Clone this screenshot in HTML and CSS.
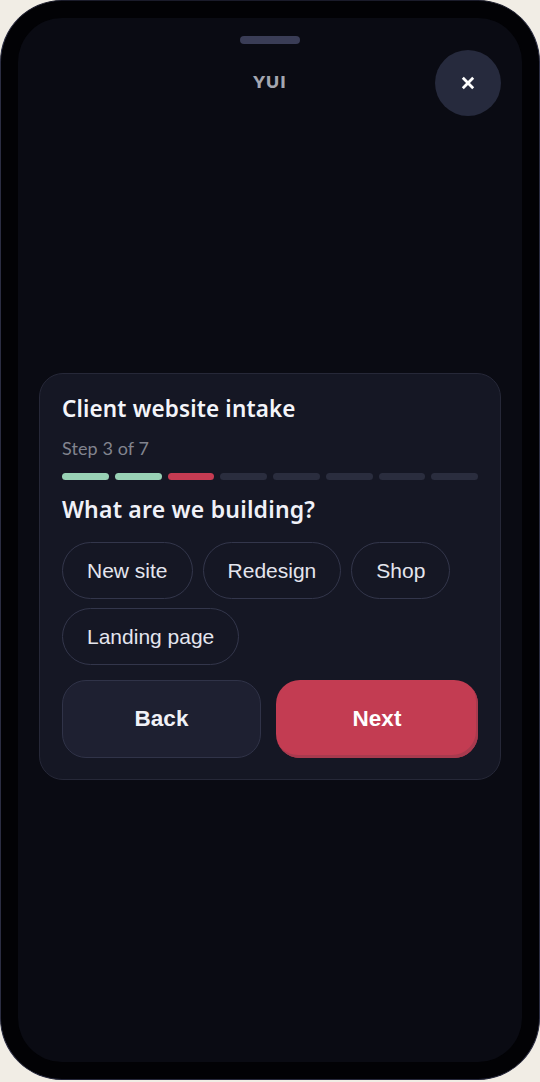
FILE: index.html
```html
<!DOCTYPE html>
<html lang="en">
<head>
<meta charset="utf-8">
<title>YUI</title>
<link rel="stylesheet" href="styles.css">
</head>
<body>
<div class="phone">
  <div class="screen">
    <header class="top">
      <div class="handle"></div>
      <div class="brand">YUI</div>
      <button class="close" aria-label="Close">
        <svg viewBox="0 0 14 14" width="14" height="14"><path d="M1.8 1.8 12.2 12.2M12.2 1.8 1.8 12.2" fill="none" stroke="#fff" stroke-width="2.8"/></svg>
      </button>
    </header>
    <main class="stage">
      <section class="card">
        <h1 class="title">Client website intake</h1>
        <p class="step">Step 3 of 7</p>
        <div class="progress">
          <span class="seg done"></span><span class="seg done"></span><span class="seg now"></span><span class="seg"></span><span class="seg"></span><span class="seg"></span><span class="seg"></span><span class="seg"></span>
        </div>
        <h2 class="question">What are we building?</h2>
        <div class="chips">
          <button class="chip">New site</button>
          <button class="chip">Redesign</button>
          <button class="chip">Shop</button>
          <button class="chip">Landing page</button>
        </div>
        <div class="actions">
          <button class="btn back">Back</button>
          <button class="btn next">Next</button>
        </div>
      </section>
    </main>
  </div>
</div>
</body>
</html>
```
FILE: styles.css
```css
* { box-sizing: border-box; }
html, body { margin: 0; height: 100%; }
body { background: #f1ede5; font-family: "Liberation Sans", Arial, sans-serif; overflow: hidden; }
.phone {
  width: 540px; height: 1080px; padding: 17px 17px;
  background: #020205; border: 1px solid #2b2d42; border-radius: 62px;
  border-top-color: #1a1b2a; border-bottom-color: #24263a;
}
.screen {
  height: 100%; display: flex; flex-direction: column;
  background: #0a0b13; border-radius: 44px; padding-bottom: 25px;
}
.top { position: relative; height: 98px; display: flex; flex-direction: column; align-items: center; padding-top: 18px; }
.handle { width: 60px; height: 8px; border-radius: 4px; background: #3a3d56; }
.brand { margin-top: 26px; font: 800 17.5px/24px Lato, sans-serif; letter-spacing: 1px; color: #a4a6b0; }
.close {
  position: absolute; top: 32px; right: 21px; width: 66px; height: 66px;
  border: 0; border-radius: 50%; background: #262a3d;
  display: flex; align-items: center; justify-content: center; padding: 0;
}
.stage { flex: 1; display: flex; align-items: center; justify-content: center; }
.card {
  width: 462px; height: 407px; padding: 20px 22px;
  background: #151724; border: 1px solid #262838; border-radius: 24px;
}
.title { margin: 0; font: 600 22.5px/30px "Noto Sans", sans-serif; letter-spacing: 0.15px; color: #f4f5fa; }
.step { margin: 12px 0 0; font: 400 18px/24px Lato, sans-serif; letter-spacing: 0.1px; color: #82848f; }
.progress { display: flex; gap: 6px; margin-top: 13px; }
.seg { flex: 1; height: 7px; border-radius: 4px; background: #2a2d3e; }
.seg.done { background: #98d1b5; }
.seg.now { background: #c53b52; }
.question { margin: 15px 0 0; font: 600 23px/28px "Noto Sans", sans-serif; letter-spacing: 0.2px; color: #f0f1f8; }
.chips { display: flex; flex-wrap: wrap; gap: 9px 10px; margin-top: 19px; }
.chip {
  height: 57px; padding: 0 24px; border: 1px solid #33364b; border-radius: 29px;
  background: transparent; color: #e4e5ee; font: 400 21px "Liberation Sans", Arial, sans-serif;
}
.actions { display: flex; gap: 15px; margin-top: 15px; }
.btn { height: 78px; border-radius: 24px; font: 700 22.5px "Liberation Sans", Arial, sans-serif; padding: 0; }
.back { width: 200px; background: #1e2031; border: 1px solid #303348; color: #f0f1f7; }
.next { width: 203px; background: #c33c52; border: 0; color: #fff; box-shadow: inset -2px -3px 0 #a83a4e; }
```
